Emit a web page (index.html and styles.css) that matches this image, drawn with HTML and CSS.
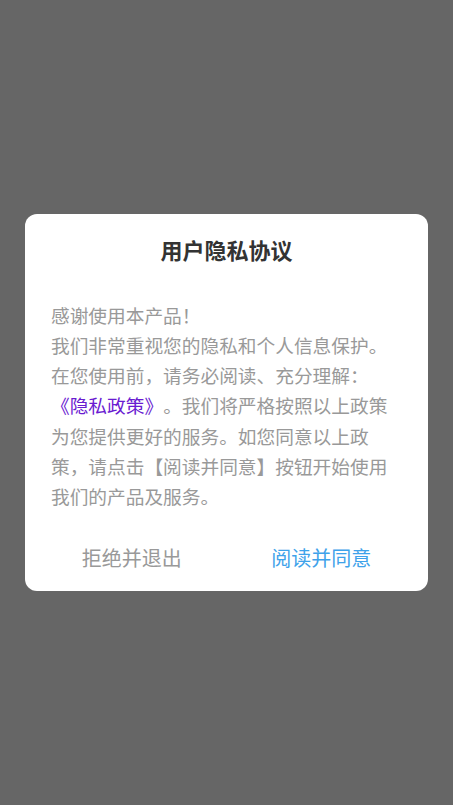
FILE: index.html
```html
<!DOCTYPE html>
<html lang="zh-CN">
<head>
<meta charset="utf-8">
<title>用户隐私协议</title>
<link rel="stylesheet" href="styles.css">
</head>
<body>
<div class="screen">
  <div class="dialog">
    <h1 class="title">用户隐私协议</h1>
    <p class="content">感谢使用本产品！<br>我们非常重视您的隐私和个人信息保护。<br>在您使用前，请务必阅读、充分理解：<br><a class="link" href="#">《隐私政策》</a>。我们将严格按照以上政策<br>为您提供更好的服务。如您同意以上政<br>策，请点击【阅读并同意】按钮开始使用<br>我们的产品及服务。</p>
    <div class="actions">
      <button class="btn btn-reject">拒绝并退出</button>
      <button class="btn btn-agree">阅读并同意</button>
    </div>
  </div>
</div>
</body>
</html>
```
FILE: styles.css
```css
* { box-sizing: border-box; }
html, body { margin: 0; padding: 0; }
body {
  background: #666666;
  font-family: "Noto Sans CJK SC", "Noto Sans", sans-serif;
  text-spacing-trim: space-all;
}
.screen {
  min-height: 805px;
  display: flex;
  align-items: center;
  justify-content: center;
}
.dialog {
  width: 403px;
  background: #ffffff;
  border-radius: 12px;
  padding: 20px 0 18px;
  display: flex;
  flex-direction: column;
}
.title {
  margin: 0;
  text-align: center;
  font-size: 22px;
  line-height: 30px;
  font-weight: 700;
  color: #333333;
}
.content {
  margin: 36px 0 0;
  padding: 0 26px;
  font-size: 18.7px;
  line-height: 30.2px;
  color: #999999;
  white-space: nowrap;
  text-spacing-trim: space-all;
}
.link {
  color: #6a1bd1;
  text-decoration: none;
}
.actions {
  display: flex;
  padding: 0 12px;
  margin-top: 32px;
}
.btn {
  flex: 1;
  border: 0;
  background: transparent;
  font-family: inherit;
  font-size: 20px;
  line-height: 30px;
  padding: 0;
}
.btn-reject { color: #999999; }
.btn-agree { color: #3ea2ea; }
```
